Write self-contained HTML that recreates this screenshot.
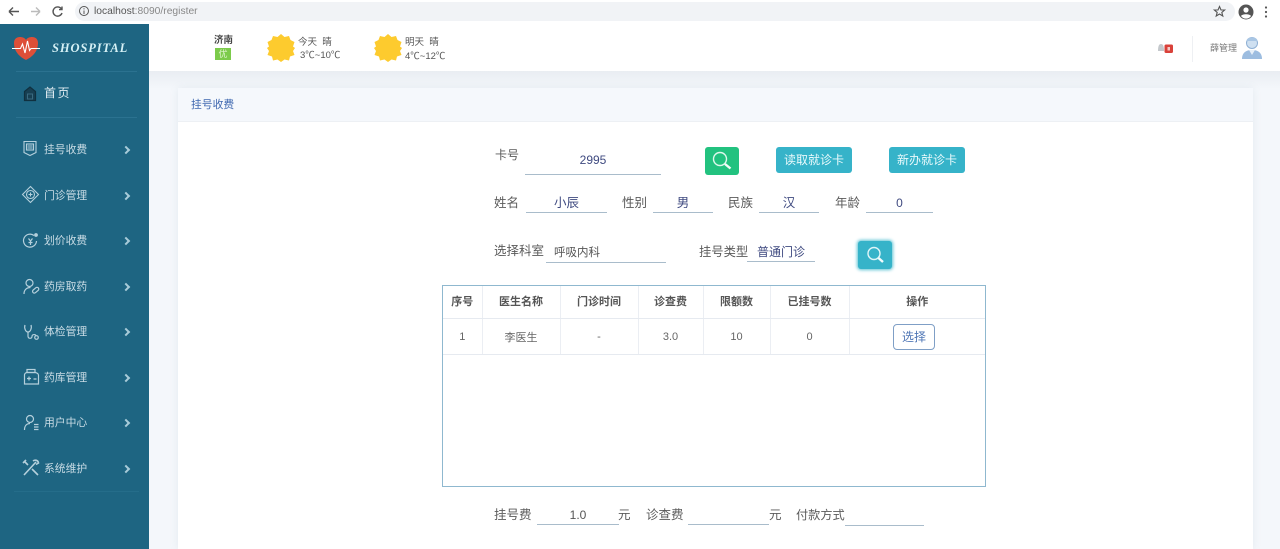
<!DOCTYPE html>
<html lang="zh">
<head>
<meta charset="utf-8">
<style>
html,body{margin:0;padding:0;width:1280px;height:549px;overflow:hidden;background:#f4f7fb;font-family:"Liberation Sans","Noto Sans CJK SC",sans-serif;}
.a{position:absolute;white-space:nowrap;}
.lb{font-size:12.5px;line-height:18px;color:#5a5a5a;}
.val{font-size:12.5px;line-height:18px;color:#3f4a80;text-align:center;}
.ln{position:absolute;height:1px;background:#a9bccb;}
.nav{font-size:10.8px;line-height:16px;color:#c9dce5;left:44px;}
.chev{position:absolute;left:123px;width:4px;height:4px;border-top:2px solid #a8cbd9;border-right:2px solid #a8cbd9;transform:rotate(45deg);}
.ic{position:absolute;left:20px;}
.btn{position:absolute;background:#36b3c9;border-radius:3px;color:#eafafc;font-size:12px;text-align:center;}
th,td{padding:0;text-align:center;border-right:1px solid #ebeef3;border-bottom:1px solid #e6eaf0;font-size:11px;}
th{color:#555;font-weight:bold;height:30px;padding-bottom:2px;vertical-align:middle;}
td{color:#666;height:35px;}
th:last-child,td:last-child{border-right:none;}
</style>
</head>
<body>
<!-- browser bar -->
<div class="a" style="left:0;top:0;width:1280px;height:24px;background:#fff;"></div>
<div class="a" style="left:75px;top:2px;width:1160px;height:19px;background:#f1f3f6;border-radius:10px;"></div>
<svg class="a" style="left:6px;top:4px" width="60" height="16" viewBox="0 0 60 16" fill="none">
<path d="M3 7.500H13M3 7.500L7 3.500M3 7.500L7 11.500" stroke="#555" stroke-width="1.400"/>
<path d="M25 7.500H34M34 7.500L30 3.500M34 7.500L30 11.500" stroke="#bbb" stroke-width="1.400"/>
<path d="M55.500 5A4.600 4.600 0 1 0 56 9M56 2.500V5.600H53" stroke="#555" stroke-width="1.400"/>
</svg>
<svg class="a" style="left:78px;top:5px" width="13" height="13" viewBox="0 0 13 13" fill="none"><circle cx="6" cy="6" r="4.500" stroke="#555"/><path d="M6 5.500V9M6 3.200V4.400" stroke="#555"/></svg>
<div class="a" style="left:94px;top:4px;font-size:10.300px;line-height:15px;color:#555;">localhost<span style="color:#888">:8090/register</span></div>
<svg class="a" style="left:1212px;top:4px" width="60" height="16" viewBox="0 0 60 16">
<path d="M7.500 2.500L9 6H12.600L9.800 8.400L10.800 12L7.500 10L4.200 12L5.200 8.400L2.400 6H6Z" fill="none" stroke="#555" stroke-width="1.100"/>
<circle cx="34" cy="8" r="7.500" fill="#555"/><circle cx="34" cy="6" r="2.600" fill="#fff"/><path d="M29 12C30 9.600 38 9.600 39 12A6 6 0 0 1 29 12Z" fill="#fff"/>
<circle cx="54" cy="3.500" r="1.100" fill="#555"/><circle cx="54" cy="8" r="1.100" fill="#555"/><circle cx="54" cy="12.500" r="1.100" fill="#555"/>
</svg>

<!-- top header -->
<div class="a" style="left:149px;top:24px;width:1131px;height:47px;background:#fff;"></div>
<div class="a" style="left:149px;top:71px;width:1131px;height:478px;background:linear-gradient(#e9edf2,#f4f7fb 18px);"></div>
<div class="a" style="left:214px;top:35px;font-size:9.500px;line-height:12px;font-weight:bold;color:#444;">济南</div>
<div class="a" style="left:215px;top:48px;width:16px;height:12px;background:#7ccb4b;color:#dff5cf;font-size:9px;line-height:12px;text-align:center;">优</div>
<svg class="a" style="left:267px;top:34px" width="28" height="28" viewBox="0 0 28 28"><polygon fill="#fdcb2e" points="14,0 17.500,3 22,2 23.500,6 27.500,8 26,12.500 28,14 26,17 27.500,21 23,22.500 22,26.500 17.500,25.500 14,28 10.500,25.500 6,26.500 5,22.500 0.500,21 2,17 0,14 2,12.500 0.500,8 4.500,6 6,2 10.500,3"/></svg>
<div class="a" style="left:298px;top:36px;font-size:9.500px;line-height:13px;color:#555;">今天 &nbsp;晴</div>
<div class="a" style="left:300px;top:49px;font-size:9.500px;line-height:13px;color:#555;">3℃~10℃</div>
<svg class="a" style="left:374px;top:34px" width="28" height="28" viewBox="0 0 28 28"><polygon fill="#fdcb2e" points="14,0 17.500,3 22,2 23.500,6 27.500,8 26,12.500 28,14 26,17 27.500,21 23,22.500 22,26.500 17.500,25.500 14,28 10.500,25.500 6,26.500 5,22.500 0.500,21 2,17 0,14 2,12.500 0.500,8 4.500,6 6,2 10.500,3"/></svg>
<div class="a" style="left:405px;top:36px;font-size:9.500px;line-height:13px;color:#555;">明天 &nbsp;晴</div>
<div class="a" style="left:405px;top:50px;font-size:9.500px;line-height:13px;color:#555;">4℃~12℃</div>
<svg class="a" style="left:1156px;top:42px" width="18" height="12" viewBox="0 0 18 12"><path d="M2 9C2 4 3 2 5 2S8 4 8 9Z" fill="#c4c8cc"/><rect x="8.500" y="2.500" width="8.500" height="8.500" rx="1.500" fill="#d9413a"/><rect x="11.500" y="5" width="2.500" height="3.500" fill="#f5c9c5"/></svg>
<div class="a" style="left:1192px;top:36px;width:1px;height:26px;background:#eef0f3;"></div>
<div class="a" style="left:1210px;top:41px;font-size:9px;line-height:14px;color:#777;">薛管理</div>
<svg class="a" style="left:1241px;top:35px" width="22" height="25" viewBox="0 0 22 25"><path d="M1 24C1 17 6 15 11 15S21 17 21 24Z" fill="#9dbde0"/><path d="M8 15L11 20L14 15Z" fill="#e8f0f8"/><circle cx="11" cy="8" r="5.500" fill="#cfe0f1" stroke="#8fb0d4"/><path d="M5.500 6C6 1 16 1 16.500 6Z" fill="#a9c6e4"/></svg>

<!-- sidebar -->
<div class="a" style="left:0;top:24px;width:149px;height:525px;background:#1e6582;"></div>
<div class="a" style="left:16px;top:71px;width:121px;height:1px;background:#2b7290;"></div>
<div class="a" style="left:16px;top:117px;width:121px;height:1px;background:#2b7290;"></div>
<div class="a" style="left:14px;top:491px;width:125px;height:1px;background:#256d8a;"></div>
<svg class="a" style="left:11px;top:34px" width="30" height="28" viewBox="0 0 30 28"><path d="M15 26C9 23 3 18 3 9C3 5 5.500 3 9 3C11.500 3 14 4 15 6C16 4 18.500 3 21 3C24.500 3 27 5 27 9C27 18 21 23 15 26Z" fill="#dd4f38"/><path d="M1 14.500H9.500L11.500 10L14 19L16.500 7L18.500 16.500L20 14.500H29" fill="none" stroke="#fff" stroke-width="1.100"/></svg>
<div class="a" style="left:52px;top:40px;font-family:'Liberation Serif',serif;font-style:italic;font-weight:bold;font-size:12.500px;line-height:16px;color:#d5f0f5;letter-spacing:0.900px;">SHOSPITAL</div>
<svg class="a" style="left:23px;top:85px" width="14" height="17" viewBox="0 0 14 17" fill="none"><path d="M1.500 6.500L7 2L12.500 6.500V15.500H1.500Z" fill="#173f52" stroke="#10303f" stroke-width="1.200"/><rect x="4.500" y="9" width="5" height="5" stroke="#3a6a80"/></svg>
<div class="a" style="left:44px;top:85px;font-size:12px;line-height:17px;letter-spacing:1.500px;color:#e3edf2;">首页</div>

<svg class="ic" style="top:140px" width="20" height="18" viewBox="0 0 20 18" fill="none" stroke="#b5d0dc" stroke-width="1.100"><path d="M4 1.500H16V12.500L10 15.500L4 12.500Z"/><rect x="6.500" y="4" width="7" height="6"/><path d="M7.500 6H12.500M7.500 8H12.500"/></svg>
<div class="a nav" style="top:142px">挂号收费</div><div class="chev" style="top:147px"></div>

<svg class="ic" style="top:185px;left:21px" width="19" height="19" viewBox="0 0 19 19" fill="none" stroke="#b5d0dc" stroke-width="1.100"><path d="M9.500 1.500L17.500 9.500L9.500 17.500L1.500 9.500Z"/><circle cx="9.500" cy="9.500" r="4"/><path d="M9.500 7.500V11.500M7.500 9.500H11.500"/></svg>
<div class="a nav" style="top:188px">门诊管理</div><div class="chev" style="top:193px"></div>

<svg class="ic" style="top:232px;left:22px" width="17" height="18" viewBox="0 0 17 18" fill="none" stroke="#b5d0dc" stroke-width="1.200"><path d="M12 3.500A6.500 6.500 0 1 0 14.500 9"/><circle cx="14" cy="3" r="1.300" fill="#b5d0dc"/><path d="M6.500 6.500L8.500 9L10.500 6.500M8.500 9V13M6.500 10.500H10.500"/></svg>
<div class="a nav" style="top:233px">划价收费</div><div class="chev" style="top:238px"></div>

<svg class="ic" style="top:278px;left:23px" width="17" height="17" viewBox="0 0 17 17" fill="none" stroke="#b5d0dc" stroke-width="1.200"><circle cx="6.500" cy="5" r="3.500"/><path d="M1 16C1 11.500 4 9.500 7.500 9.500"/><rect x="9" y="10.500" width="7" height="3.500" rx="1.700" transform="rotate(-40 12.500 12)"/></svg>
<div class="a nav" style="top:279px">药房取药</div><div class="chev" style="top:284px"></div>

<svg class="ic" style="top:323px;left:23px" width="17" height="18" viewBox="0 0 17 18" fill="none" stroke="#b5d0dc" stroke-width="1.200"><path d="M2 2C1 5 2.500 9 5 9S9 5 8 2"/><path d="M5 9V13C5 16 9 16 9 13.500C9 11 13 11 13 13"/><circle cx="13.500" cy="14.500" r="1.800"/></svg>
<div class="a nav" style="top:324px">体检管理</div><div class="chev" style="top:329px"></div>

<svg class="ic" style="top:368px;left:23px" width="17" height="18" viewBox="0 0 17 18" fill="none" stroke="#b5d0dc" stroke-width="1.200"><rect x="4" y="1.500" width="8" height="3"/><path d="M1.500 7C1.500 5.500 3 4.500 4 4.500H12C13 4.500 15.500 5.500 15.500 7V16H1.500Z"/><path d="M4 10.500H8M6 8.500V12.500M10.500 11H13.500"/></svg>
<div class="a nav" style="top:370px">药库管理</div><div class="chev" style="top:375px"></div>

<svg class="ic" style="top:414px;left:23px" width="17" height="18" viewBox="0 0 17 18" fill="none" stroke="#b5d0dc" stroke-width="1.200"><circle cx="7" cy="5" r="3.500"/><path d="M1.500 16C1.500 11.500 4 9.500 7 9.500M11 10.500H15.500M11 13H15.500M11 15.500H15.500"/></svg>
<div class="a nav" style="top:415px">用户中心</div><div class="chev" style="top:420px"></div>

<svg class="ic" style="top:459px;left:22px" width="18" height="18" viewBox="0 0 18 18" fill="none" stroke="#b5d0dc" stroke-width="1.600"><path d="M2 16L14 3M11 2C13 0.500 16 1 16.500 4L14 5.500M2 2L6 6M4 1L1 4M10 10L16 16"/></svg>
<div class="a nav" style="top:461px">系统维护</div><div class="chev" style="top:466px"></div>

<!-- card -->
<div class="a" style="left:178px;top:88px;width:1075px;height:461px;background:#fff;border-radius:3px 3px 0 0;box-shadow:0 0 8px rgba(160,175,190,.18);"></div>
<div class="a" style="left:178px;top:88px;width:1075px;height:33px;background:#f5f8fc;border-bottom:1px solid #edf0f4;"></div>
<div class="a" style="left:191px;top:97px;font-size:10.800px;line-height:16px;color:#3f68b0;">挂号收费</div>

<!-- row 1 -->
<div class="a lb" style="left:495px;top:146px;font-size:12px;">卡号</div>
<div class="a val" style="left:525px;top:151px;width:136px;font-size:12px;">2995</div>
<div class="ln" style="left:525px;top:174px;width:136px;"></div>
<div class="a" style="left:705px;top:147px;width:34px;height:28px;background:#22c27f;border-radius:3px;"></div>
<svg class="a" style="left:711px;top:150px" width="22" height="22" viewBox="0 0 22 22" fill="none"><circle cx="9" cy="9" r="6.500" stroke="#dff7ec" stroke-width="1.400"/><path d="M14 14L19.500 18.500" stroke="#f2fcf7" stroke-width="2.400"/></svg>
<div class="btn" style="left:776px;top:147px;width:76px;height:26px;line-height:26px;">读取就诊卡</div>
<div class="btn" style="left:889px;top:147px;width:76px;height:26px;line-height:26px;">新办就诊卡</div>

<!-- row 2 -->
<div class="a lb" style="left:494px;top:194px;">姓名</div>
<div class="a val" style="left:526px;top:194px;width:81px;">小辰</div><div class="ln" style="left:526px;top:212px;width:81px;"></div>
<div class="a lb" style="left:622px;top:194px;">性别</div>
<div class="a val" style="left:653px;top:194px;width:60px;">男</div><div class="ln" style="left:653px;top:212px;width:60px;"></div>
<div class="a lb" style="left:728px;top:194px;">民族</div>
<div class="a val" style="left:759px;top:194px;width:60px;">汉</div><div class="ln" style="left:759px;top:212px;width:60px;"></div>
<div class="a lb" style="left:835px;top:194px;">年龄</div>
<div class="a val" style="left:866px;top:194px;width:67px;font-size:12px;">0</div><div class="ln" style="left:866px;top:212px;width:67px;"></div>

<!-- row 3 -->
<div class="a lb" style="left:494px;top:242px;">选择科室</div>
<div class="a" style="left:554px;top:245px;font-size:11.500px;line-height:17px;color:#555;">呼吸内科</div><div class="ln" style="left:546px;top:262px;width:120px;"></div>
<div class="a lb" style="left:699px;top:243px;font-size:12.300px;">挂号类型</div>
<div class="a val" style="left:747px;top:243px;width:68px;font-size:12px;">普通门诊</div><div class="ln" style="left:747px;top:261px;width:68px;"></div>
<div class="a" style="left:858px;top:241px;width:34px;height:28px;background:#36b3c9;border-radius:3px;box-shadow:0 0 3px 1px #5cc2d4;"></div>
<svg class="a" style="left:864px;top:244px" width="22" height="22" viewBox="0 0 22 22" fill="none"><circle cx="10" cy="9.500" r="6" stroke="#dff5f8" stroke-width="1.400"/><path d="M14.500 14L19 18" stroke="#f2fcfd" stroke-width="2.400"/></svg>

<!-- table -->
<div class="a" style="left:442px;top:285px;width:542px;height:200px;border:1px solid #8fb8cf;background:#fff;">
<table style="border-collapse:collapse;table-layout:fixed;width:542px;">
<colgroup><col style="width:39px"><col style="width:78px"><col style="width:78px"><col style="width:65px"><col style="width:67px"><col style="width:79px"><col style="width:136px"></colgroup>
<tr><th>序号</th><th>医生名称</th><th>门诊时间</th><th>诊查费</th><th>限额数</th><th>已挂号数</th><th>操作</th></tr>
<tr><td>1</td><td>李医生</td><td>-</td><td>3.0</td><td>10</td><td>0</td><td></td></tr>
</table>
</div>
<div class="a" style="left:893px;top:324px;width:40px;height:24px;border:1px solid #7f9fc6;border-radius:4px;background:#fff;color:#4f76b5;font-size:12px;line-height:24px;text-align:center;">选择</div>

<!-- bottom row -->
<div class="a lb" style="left:494px;top:506px;">挂号费</div>
<div class="a val" style="left:537px;top:506px;width:82px;color:#555;font-size:12px;">1.0</div><div class="ln" style="left:537px;top:524px;width:82px;"></div>
<div class="a lb" style="left:618px;top:506px;">元</div>
<div class="a lb" style="left:646px;top:506px;">诊查费</div>
<div class="ln" style="left:688px;top:524px;width:81px;"></div>
<div class="a lb" style="left:769px;top:506px;">元</div>
<div class="a lb" style="left:796px;top:506px;font-size:12.200px;">付款方式</div>
<div class="ln" style="left:845px;top:525px;width:79px;"></div>
</body>
</html>
